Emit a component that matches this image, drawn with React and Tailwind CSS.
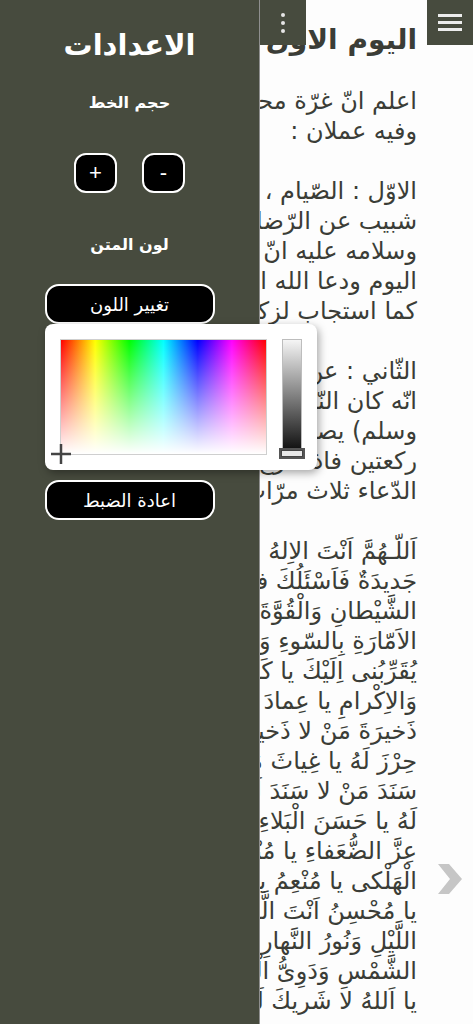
import React from 'react';

const arabic = "font-['DejaVu_Sans',sans-serif]";

// main reading text, one entry per visual line, '' = blank line between paragraphs
const lines = [
    'اعلم انّ غرّة محرّم اوّل يوم من السّنة',
    'وفيه عملان :',
    '',
    'الاوّل : الصّيام ، روى الرّيان بن',
    'شبيب عن الرّضا صلوات الله',
    'وسلامه عليه انّ من صام هذا',
    'اليوم ودعا الله استجاب الله له',
    'كما استجاب لزكريا عليه السلام',
    '',
    'الثّاني : عن الرضا عليه السلام',
    'انّه كان النّبي (صلى الله عليه وآله',
    'وسلم) يصلي في هذا اليوم',
    'ركعتين فاذا فرغ رفع يديه ودعا بهذا',
    'الدّعاء ثلاث مرّات :',
    '',
    'اَللّـهُمَّ اَنْتَ الاِلهُ الْقَديمُ وَهذِهِ سَنَةٌ',
    'جَديدَةٌ فَاَسْئَلُكَ فيهَا الْعِصْمَةَ مِنَ',
    'الشَّيْطانِ وَالْقُوَّةَ عَلى هذِهِ النَّفْسِ',
    'الاَمّارَةِ بِالسّوءِ وَالاِشْتِغالَ بِما',
    'يُقَرِّبُنى اِلَيْكَ يا كَريمُ يا ذَا الْجَلالِ',
    'وَالاِكْرامِ يا عِمادَ مَنْ لا عِمادَ لَهُ يا',
    'ذَخيرَةَ مَنْ لا ذَخيرَةَ لَهُ يا حِرْزَ مَنْ لا',
    'حِرْزَ لَهُ يا غِياثَ مَنْ لا غِياثَ لَهُ يا',
    'سَنَدَ مَنْ لا سَنَدَ لَهُ يا كَنْزَ مَنْ لا كَنْزَ',
    'لَهُ يا حَسَنَ الْبَلاءِ يا عَظيمَ الرَّجاءِ يا',
    'عِزَّ الضُّعَفاءِ يا مُنْقِذَ الْغَرْقى يا مُنْجِىَ',
    'الْهَلْكى يا مُنْعِمُ يا مُجْمِلُ يا مُفْضِلُ',
    'يا مُحْسِنُ اَنْتَ الَّذى سَجَدَ لَكَ سَوادُ',
    'اللَّيْلِ وَنُورُ النَّهارِ وَضَوْءُ الْقَمَرِ',
    'الشَّمْسِ وَدَوِىُّ الْماءِ وَحَفيفُ الشَّجَرِ',
    'يا اَللهُ لا شَريكَ لَكَ',
];

function ColorPicker() {
    return (
        <div className="self-stretch pl-[45px]" dir="ltr">
            <div className="w-[272px] h-[146px] bg-white rounded-[8px] shadow-[2px_3px_8px_rgba(0,0,0,0.35)] flex gap-[15px] p-[15px]">
                {/* hue / saturation area */}
                <div className="relative w-[208px] h-[116px] border border-[#cfcfcf] bg-[image:linear-gradient(to_bottom,rgba(255,255,255,0),#ffffff),linear-gradient(to_right,#ff0000,#ffff00,#00ff00,#00ffff,#0000ff,#ff00ff,#ff0000)]">
                    <svg className="absolute left-[-11px] top-[103px]" width="22" height="22" viewBox="0 0 22 22">
                        <path d="M11 1v20M1 11h20" stroke="#444" strokeWidth="2.5" />
                    </svg>
                </div>
                {/* lightness slider */}
                <div className="relative w-[20px] h-[116px]">
                    <div className="w-[20px] h-[112px] border border-[#bdbdbd] bg-[linear-gradient(to_bottom,#f5f5f5,#101010)]" />
                    <div className="absolute left-[-3px] top-[109px] w-[26px] h-[11px] border-2 border-[#555] bg-[#444] p-[1px]">
                        <div className="w-full h-full bg-[#e8e8e8]" />
                    </div>
                </div>
            </div>
        </div>
    );
}

function Drawer() {
    return (
        <div className={`absolute left-0 top-0 h-full w-[260px] bg-[#474b3e] border-r border-[#8f8f8f] flex flex-col items-center ${arabic}`} dir="rtl">
            {/* overflow menu tab */}
            <div className="absolute left-[260px] top-0 w-[46px] h-[45px] bg-[#474b3e] flex flex-col items-center justify-center gap-[4px]">
                <span className="w-[4px] h-[4px] rounded-full bg-[#e6e6e6]" />
                <span className="w-[4px] h-[4px] rounded-full bg-[#e6e6e6]" />
                <span className="w-[4px] h-[4px] rounded-full bg-[#e6e6e6]" />
            </div>

            <h1 className="mt-[25px] text-[29px] leading-[40px] font-bold text-white">الاعدادات</h1>

            <p className="mt-[26px] text-[16px] leading-[24px] font-bold text-white">حجم الخط</p>

            <div className="mt-[38px] flex gap-[25px]" dir="ltr">
                <button className="w-[43px] h-[40px] rounded-[12px] bg-black border-2 border-white text-white text-[22px] leading-none font-['Liberation_Sans',sans-serif]">+</button>
                <button className="w-[43px] h-[40px] rounded-[12px] bg-black border-2 border-white text-white text-[22px] leading-none font-['Liberation_Sans',sans-serif]">-</button>
            </div>

            <p className="mt-[40px] text-[16px] leading-[24px] font-bold text-white">لون المتن</p>

            <button className="mt-[27px] w-[170px] h-[40px] rounded-[14px] bg-black border-2 border-white text-white text-[18px]">تغيير اللون</button>

            <ColorPicker />

            <button className="mt-[10px] w-[170px] h-[40px] rounded-[14px] bg-black border-2 border-white text-white text-[18px]">اعادة الضبط</button>
        </div>
    );
}

export default function App() {
    return (
        <div className="relative w-full h-[1024px] overflow-hidden bg-[#fdfdfd]">
            {/* reading page, the part left of the drawer edge is hidden */}
            <div className="ml-[260px] overflow-hidden">
                <div className={`pr-[56px] pt-[20px] text-[#3b3d37] ${arabic}`} dir="rtl">
                    <h2 className="text-[28px] leading-[40px] font-bold whitespace-nowrap">اليوم الاوّل من شهر محرّم</h2>
                    <div className="mt-[26px] text-[24px] leading-[30px]">
                        {lines.map((l, i) => (
                            <div key={i} className="h-[30px] whitespace-nowrap">{l}</div>
                        ))}
                    </div>
                </div>
            </div>

            {/* hamburger */}
            <button className="absolute right-0 top-0 w-[46px] h-[45px] bg-[#474b3e] flex flex-col items-center justify-center gap-[4px]">
                <span className="w-[24px] h-[3px] bg-[#ececec]" />
                <span className="w-[24px] h-[3px] bg-[#ececec]" />
                <span className="w-[24px] h-[3px] bg-[#ececec]" />
            </button>

            {/* next page arrow */}
            <svg className="absolute left-[438px] top-[864px]" width="24" height="30" viewBox="0 0 24 30">
                <polygon points="0,0 11,0 24,15 11,30 0,30 12,15" fill="#c6c6c6" />
            </svg>

            <Drawer />
        </div>
    );
}
